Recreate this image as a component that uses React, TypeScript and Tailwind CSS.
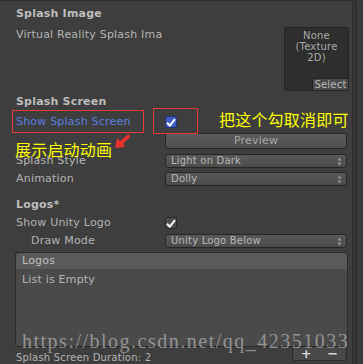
const font = "font-['DejaVu_Sans',sans-serif] tracking-[0.2px]";

function Dropdown({ value }: { value: string }) {
  return (
    <div className="flex h-[14px] w-[182px] items-center justify-between rounded-[3px] border border-[#262626] bg-gradient-to-b from-[#595959] to-[#4b4b4b] pl-[5px] pr-[4px] text-[10px] leading-none text-[#b8b8b8]">
      <span>{value}</span>
      <svg width="5" height="9" viewBox="0 0 5 9" className="text-[#9a9a9a]">
        <path d="M2.5 0.5 L4.5 3.5 H0.5 Z M2.5 8.5 L4.5 5.5 H0.5 Z" fill="currentColor" />
      </svg>
    </div>
  );
}

function Check({ blue }: { blue?: boolean }) {
  return (
    <div
      className={`flex h-[12px] w-[12px] items-center justify-center rounded-[2px] border ${
        blue ? "border-[#22327a] bg-[#3c5cc4]" : "border-[#2a2a2a] bg-[#4e4e4e]"
      }`}
    >
      <svg width="10" height="9" viewBox="0 0 10 9">
        <path d="M1 4.8 L3.8 7.6 L9 1.2" stroke="#ffffff" strokeWidth="2" fill="none" />
      </svg>
    </div>
  );
}

function Row({ label, children, indent, blue }: { label: string; children?: React.ReactNode; indent?: boolean; blue?: boolean }) {
  return (
    <div className="flex h-full items-center">
      <span className={`w-[149px] shrink-0 ${indent ? "pl-[15px]" : ""} ${blue ? "text-[#5b80e2]" : "text-[#b4b4b4]"}`}>{label}</span>
      {children}
    </div>
  );
}

export default function App() {
  return (
    <div className={`relative flex h-[364px] w-[363px] overflow-hidden bg-[#3e3e3e] text-[11px] ${font}`}>
      {/* inspector panel */}
      <div className="flex w-[353px] flex-col rounded-tr-[4px] border-r border-t border-[#2c2c2c] pl-4 pr-[5px] pt-[5px]">
        <div className="h-4 font-bold leading-4 text-[#bdbdbd]">Splash Image</div>

        <div className="mt-[5px] flex h-[64px]">
          <span className="w-[268px] leading-4 text-[#b4b4b4]">Virtual Reality Splash Ima</span>
          <div className="relative -mr-[2px] flex w-[65px] flex-col items-center rounded-[2px] border border-[#232323] bg-[#2e2e2e] pt-[2px] text-[10px] leading-[11px] text-[#aaaaaa]">
            <span>None</span>
            <span>(Texture</span>
            <span>2D)</span>
            <div className="absolute bottom-0 right-0 flex h-[12px] w-[36px] items-center justify-center border-l border-t border-[#232323] bg-[#4a4a4a] text-[10px] text-[#b8b8b8]">
              Select
            </div>
          </div>
        </div>

        <div className="mt-[3px] h-4 font-bold leading-4 text-[#bdbdbd]">Splash Screen</div>

        <div className="mt-[4px] h-4">
          <Row label="Show Splash Screen" blue>
            <Check blue />
          </Row>
        </div>

        <div className="mt-[3px] flex h-4">
          <div className="w-[149px]" />
          <div className="flex w-[182px] items-center justify-center rounded-[3px] border border-[#262626] bg-gradient-to-b from-[#5c5c5c] to-[#4e4e4e] text-[11px] text-[#a8a8a8]">
            Preview
          </div>
        </div>

        <div className="mt-[5px] h-[14px]">
          <Row label="Splash Style">
            <Dropdown value="Light on Dark" />
          </Row>
        </div>

        <div className="mt-[4px] h-[14px]">
          <Row label="Animation">
            <Dropdown value="Dolly" />
          </Row>
        </div>

        <div className="mt-[11px] h-4 font-bold leading-4 text-[#bdbdbd]">Logos*</div>

        <div className="mt-[2px] h-4">
          <Row label="Show Unity Logo">
            <Check />
          </Row>
        </div>

        <div className="mt-[3px] h-[14px]">
          <Row label="Draw Mode" indent>
            <Dropdown value="Unity Logo Below" />
          </Row>
        </div>

        {/* reorderable list */}
        <div className="-ml-px mt-[4px] flex w-[333px] flex-col rounded-[3px] border border-[#2a2a2a]">
          <div className="flex h-4 items-center rounded-t-[3px] bg-[#5a5a5a] pl-[6px] text-[#c0c0c0]">Logos</div>
          <div className="h-[77px] bg-[#4a4a4a] pl-[6px] pt-[3px] leading-4 text-[#b4b4b4]">List is Empty</div>
        </div>

        <div className="flex items-start justify-between">
          <span className="pt-[5px] text-[10px] leading-3 text-[#b4b4b4]">Splash Screen Duration: 2</span>
          <div className="flex h-[14px] w-[55px] items-center justify-around rounded-b-[3px] border border-t-0 border-[#2a2a2a] bg-[#484848] text-[13px] font-bold leading-none text-[#d8d8d8]">
            <span>+</span>
            <span>−</span>
          </div>
        </div>
      </div>

      {/* scroll strip */}
      <div className="flex w-[10px] border-r border-[#333333]">
        <div className="w-[3px] bg-[#343434]" />
        <div className="flex-1 border-l border-[#2a2a2a] bg-[#3a3a3a]" />
      </div>

      {/* annotations drawn over the screenshot */}
      <div className="absolute left-[12px] top-[110px] h-[23px] w-[132px] border border-[#e53935]" />
      <div className="absolute left-[153px] top-[108px] h-[26px] w-[45px] border border-[#e53935]" />
      <div className="absolute left-[219px] top-[109px] text-[16px] leading-5 text-[#ffff00] font-['Noto_Sans_CJK_SC',sans-serif]">
        把这个勾取消即可
      </div>
      <div className="absolute left-[15px] top-[139px] text-[16px] leading-5 text-[#ffff00] font-['Noto_Sans_CJK_SC',sans-serif]">
        展示启动动画
      </div>
      <svg className="absolute left-[113px] top-[131px]" width="20" height="20" viewBox="0 0 20 20">
        <path d="M2 17 L4 7 L7 10 L15.5 3 L17.5 5.5 L10 13 L12.5 16 Z" fill="#e8302c" />
      </svg>
      <div className="pointer-events-none absolute left-[22px] top-[331px] font-['Liberation_Serif',serif] text-[20px] leading-5 tracking-[1.5px] text-[#d4d4d4]/55">
        https://blog.csdn.net/qq_42351033
      </div>
    </div>
  );
}
